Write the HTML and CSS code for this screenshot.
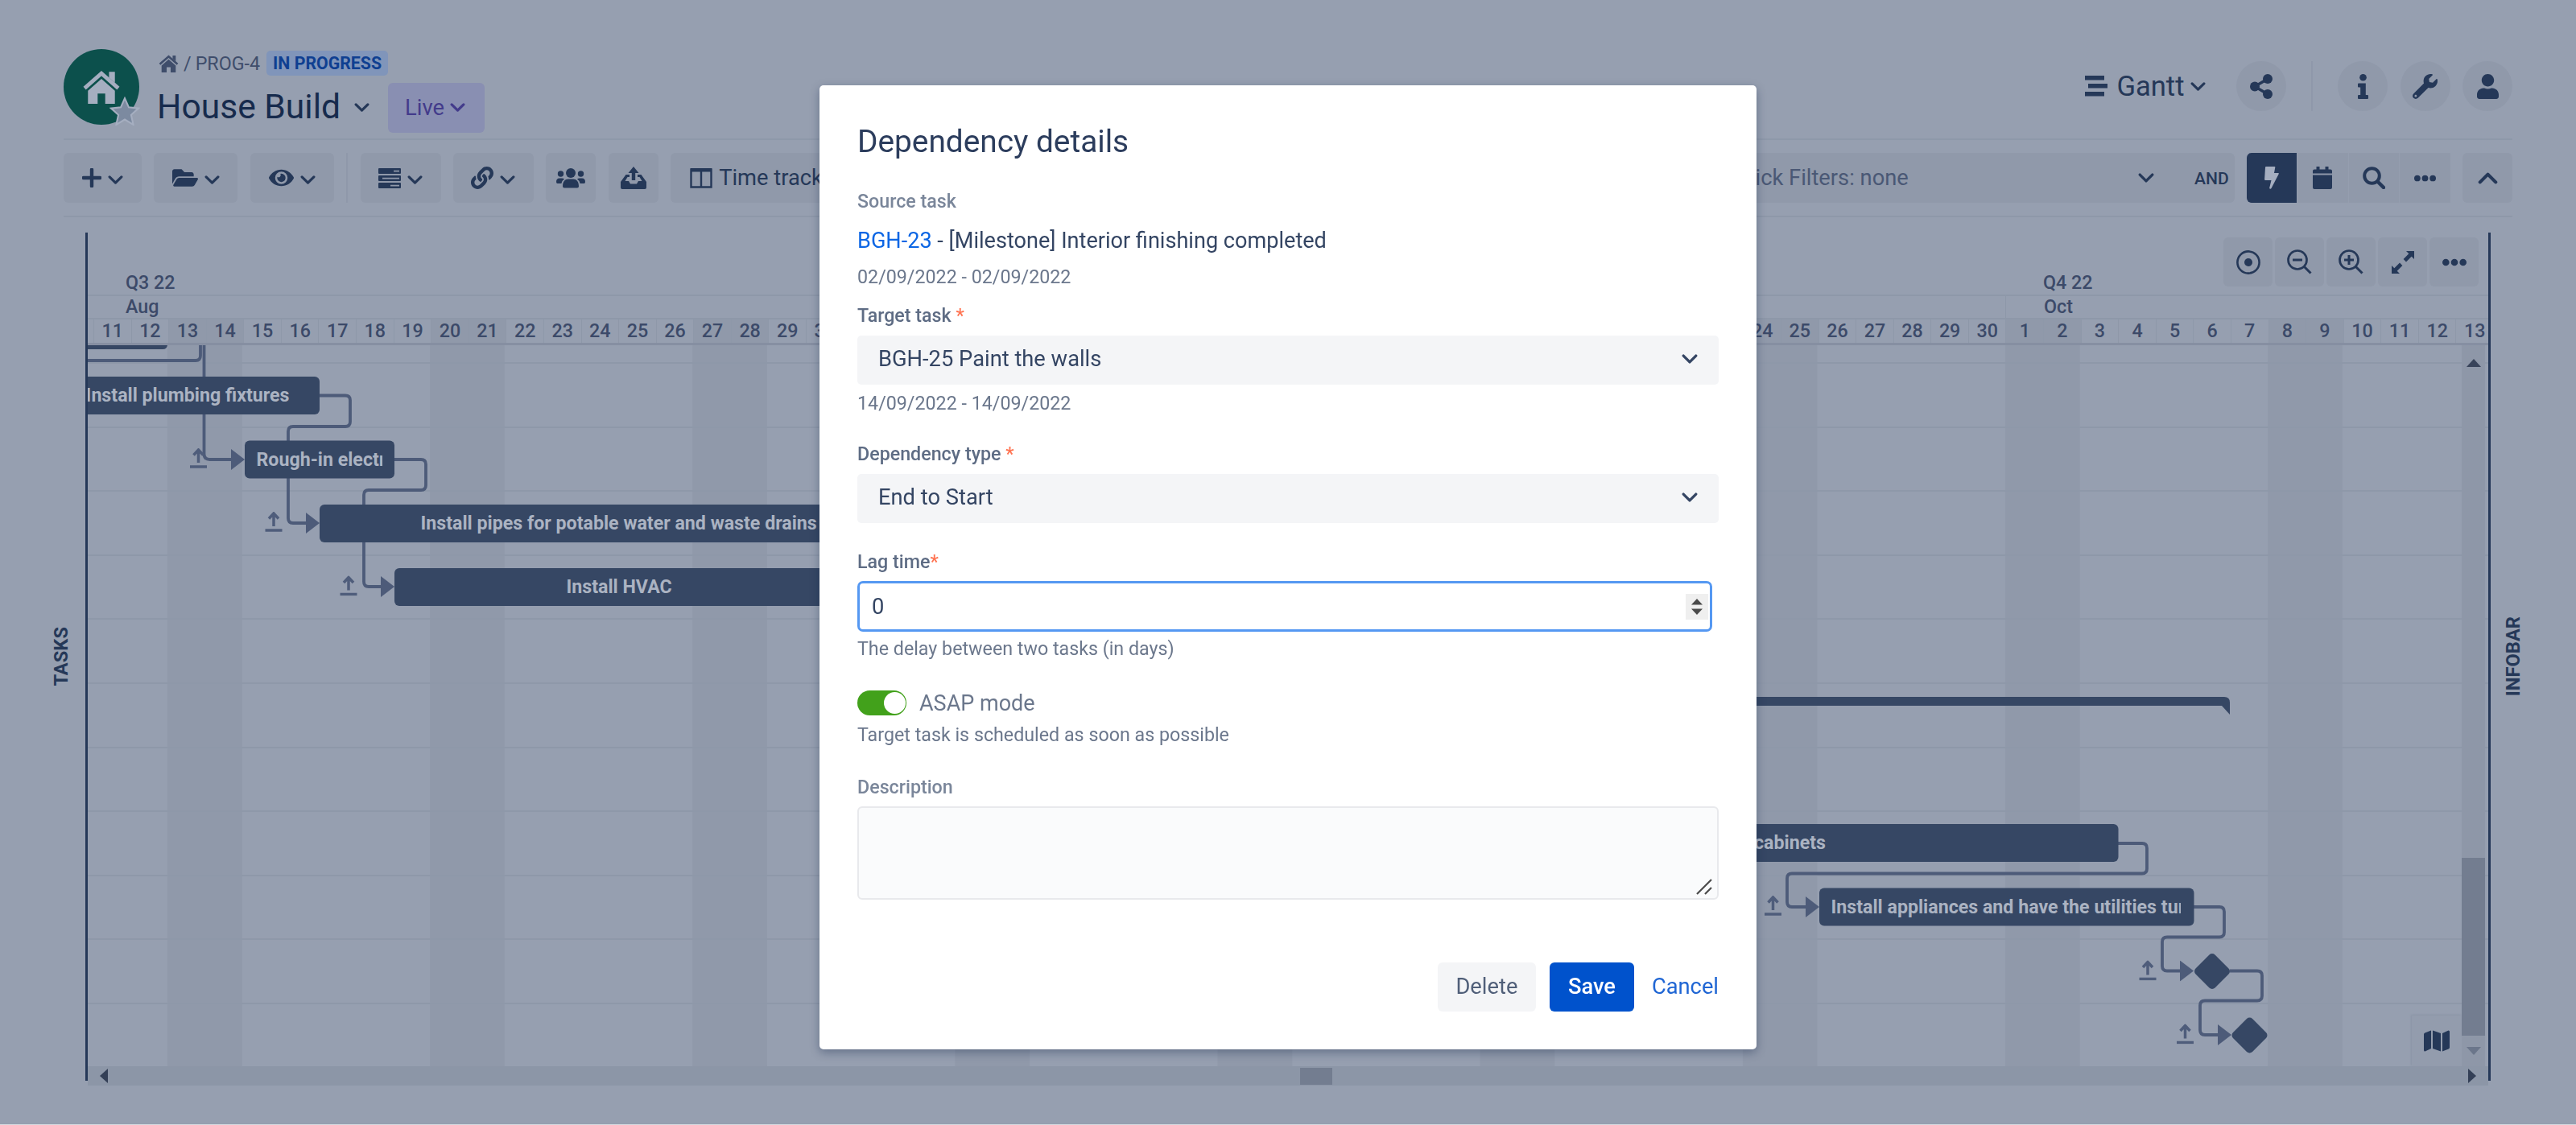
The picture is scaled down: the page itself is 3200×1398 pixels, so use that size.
FILE: index.html
```html
<!DOCTYPE html>
<html lang="en">
<head>
    <meta charset="utf-8">
    <title>House Build - Gantt</title>
    <link rel="stylesheet" href="styles.css">
</head>
<body>
    <svg class="sprite">
        <symbol id="chevron" viewBox="0 0 18 12"><path d="M2 2.5l7 7 7-7" fill="none" stroke="currentColor" stroke-width="3" stroke-linecap="round" stroke-linejoin="round"/></symbol>
        <symbol id="plus" viewBox="0 0 24 24"><path d="M12 1.8v20.4M1.8 12h20.4" fill="none" stroke="currentColor" stroke-width="4.4" stroke-linecap="round"/></symbol>
        <symbol id="home" viewBox="0 0 44 40"><path d="M2 21.500L22 4l20 17.500" fill="none" stroke="currentColor" stroke-width="4.600"/><path d="M31 2h7v13l-7-6zM22 10.500l16 14V40H26.500V28h-9v12H6V24.500z" fill="currentColor"/></symbol>
        <symbol id="star" viewBox="0 0 36 34"><path d="M18 2l4.700 10.600 11.300 1.200-8.500 7.700 2.500 11.500L18 27l-10 6 2.500-11.500L2 13.800l11.300-1.200z" fill="#7c8aa0" stroke="#a5aec0" stroke-width="2"/></symbol>
        <symbol id="folder" viewBox="0 48 576 416"><path fill="currentColor" d="M572.694 292.093L500.27 416.248A63.997 63.997 0 0 1 444.989 448H45.025c-18.523 0-30.064-20.093-20.731-36.093l72.424-124.155A64 64 0 0 1 152 256h399.964c18.523 0 30.064 20.093 20.73 36.093zM152 224h328v-48c0-26.51-21.49-48-48-48H272l-64-64H48C21.49 64 0 85.49 0 112v278.046l69.077-118.418C86.214 242.25 117.989 224 152 224z"/></symbol>
        <symbol id="eye" viewBox="0 56 576 400"><path fill="currentColor" d="M572.52 241.4C518.29 135.59 410.93 64 288 64S57.68 135.64 3.48 241.41a32.35 32.35 0 0 0 0 29.19C57.71 376.41 165.07 448 288 448s230.32-71.64 284.52-177.41a32.35 32.35 0 0 0 0-29.19zM288 400a144 144 0 1 1 144-144 143.93 143.93 0 0 1-144 144zm0-240a95.31 95.31 0 0 0-25.31 3.79 47.85 47.85 0 0 1-66.9 66.9A95.78 95.78 0 1 0 288 160z"/></symbol>
        <symbol id="rows" viewBox="0 0 28 25"><path fill="currentColor" fill-rule="evenodd" d="M1 0h26a1 1 0 0 1 1 1v5a1 1 0 0 1-1 1H1a1 1 0 0 1-1-1V1a1 1 0 0 1 1-1zM19 2.800v1.600h7V2.800zM1 9h26a1 1 0 0 1 1 1v5a1 1 0 0 1-1 1H1a1 1 0 0 1-1-1v-5a1 1 0 0 1 1-1zM5 11.800v1.600h21v-1.600zM1 18h26a1 1 0 0 1 1 1v5a1 1 0 0 1-1 1H1a1 1 0 0 1-1-1v-5a1 1 0 0 1 1-1zM15 20.800v1.600h11v-1.600z"/></symbol>
        <symbol id="link" viewBox="0 0 512 512"><path fill="currentColor" d="M326.612 185.391c59.747 59.809 58.927 155.698.36 214.59-.11.12-.24.25-.36.37l-67.2 67.2c-59.27 59.27-155.699 59.262-214.96 0-59.27-59.26-59.27-155.7 0-214.96l37.106-37.106c9.84-9.84 26.786-3.3 27.294 10.606.648 17.722 3.826 35.527 9.69 52.721 1.986 5.822.567 12.262-3.783 16.612l-13.087 13.087c-28.026 28.026-28.905 73.66-1.155 101.96 28.024 28.579 74.086 28.749 102.325.51l67.2-67.19c28.191-28.191 28.073-73.757 0-101.83-3.701-3.694-7.429-6.564-10.341-8.569a16.037 16.037 0 0 1-6.947-12.606c-.396-10.567 3.348-21.456 11.698-29.806l21.054-21.055c5.521-5.521 14.182-6.199 20.584-1.731a152.482 152.482 0 0 1 20.522 17.197zM467.547 44.449c-59.261-59.262-155.69-59.27-214.96 0l-67.2 67.2c-.12.12-.25.25-.36.37-58.566 58.892-59.387 154.781.36 214.59a152.454 152.454 0 0 0 20.521 17.196c6.402 4.468 15.064 3.789 20.584-1.731l21.054-21.055c8.35-8.35 12.094-19.239 11.698-29.806a16.037 16.037 0 0 0-6.947-12.606c-2.912-2.005-6.64-4.875-10.341-8.569-28.073-28.073-28.191-73.639 0-101.83l67.2-67.19c28.239-28.239 74.3-28.069 102.325.51 27.75 28.3 26.872 73.934-1.155 101.96l-13.087 13.087c-4.35 4.35-5.769 10.79-3.783 16.612 5.864 17.194 9.042 34.999 9.69 52.721.509 13.906 17.454 20.446 27.294 10.606l37.106-37.106c59.271-59.259 59.271-155.699.001-214.959z"/></symbol>
        <symbol id="users" viewBox="0 0 36 25"><g fill="currentColor"><circle cx="18" cy="6" r="6"/><circle cx="5.500" cy="7" r="3.700"/><circle cx="30.500" cy="7" r="3.700"/><path d="M8 22.500c0-6 3-9 7-9h6c4 0 7 3 7 9q0 2-2 2H10q-2 0-2-2zM0 17q0-4.500 4-4.500h3q2 0 3 1-3 2-3.600 5.500H1.500Q0 19 0 17zM36 17q0-4.500-4-4.500h-3q-2 0-3 1 3 2 3.600 5.500h4.900Q36 19 36 17z"/></g></symbol>
        <symbol id="export" viewBox="0 0 32 28"><g fill="currentColor"><path d="M16 0l6.500 8h-4.300v9h-4.400V8H9.500z"/><path d="M6.500 10H11v3H8.500L5.500 18H10l2 3.500h8l2-3.500h4.500l-3-5H21v-3h4.500L32 19v7q0 2-2 2H2q-2 0-2-2v-7z"/></g></symbol>
        <symbol id="columns" viewBox="0 0 28 25"><path d="M1.500 1.500h25v22h-25zM14 2v21" fill="none" stroke="currentColor" stroke-width="2.400"/><path d="M1 0h26v4.500H1z" fill="currentColor"/></symbol>
        <symbol id="gantt" viewBox="0 0 28 26"><path fill="currentColor" d="M0 0h24v5.500H0zM4 10h24v5.500H4zM0 20h24v5.500H0z"/></symbol>
        <symbol id="share" viewBox="0 0 28 31"><g fill="currentColor"><circle cx="22" cy="6" r="6"/><circle cx="6" cy="15.500" r="6"/><circle cx="22" cy="25" r="6"/></g><path d="M22 6L6 15.500 22 25" fill="none" stroke="currentColor" stroke-width="3.500"/></symbol>
        <symbol id="info" viewBox="0 0 13 31"><g fill="currentColor"><circle cx="6.500" cy="4.300" r="4.300"/><path d="M1 11.500h8.800V26H12q1 0 1 1v3q0 1-1 1H1q-1 0-1-1v-3q0-1 1-1h2.200v-9.500H1q-1 0-1-1v-3q0-1 1-1z"/></g></symbol>
        <symbol id="wrench" viewBox="0 0 512 512"><path fill="currentColor" d="M507.73 109.1c-2.24-9.03-13.54-12.09-20.12-5.51l-74.36 74.36-67.88-11.31-11.31-67.88 74.36-74.36c6.62-6.62 3.43-17.9-5.66-20.16-47.38-11.74-99.55.91-136.58 37.93-39.64 39.64-50.55 97.1-34.05 147.2L18.74 402.76c-24.99 24.99-24.99 65.51 0 90.5 24.99 24.99 65.51 24.99 90.5 0l213.21-213.21c50.12 16.71 107.47 5.68 147.37-34.22 37.07-37.07 49.7-89.32 37.91-136.73zM64 472c-13.25 0-24-10.75-24-24 0-13.26 10.75-24 24-24s24 10.74 24 24c0 13.25-10.75 24-24 24z"/></symbol>
        <symbol id="user" viewBox="0 0 448 512"><path fill="currentColor" d="M224 256c70.7 0 128-57.3 128-128S294.7 0 224 0 96 57.3 96 128s57.3 128 128 128zm89.6 32h-16.7c-22.2 10.200-46.900 16-72.900 16s-50.600-5.800-72.900-16h-16.700C60.200 288 0 348.200 0 422.400V464c0 26.500 21.500 48 48 48h352c26.500 0 48-21.500 48-48v-41.600c0-74.200-60.200-134.400-134.400-134.400z"/></symbol>
        <symbol id="bolt" viewBox="0 0 18 28"><path fill="currentColor" d="M2 0h10.500q1 0 .8 1L12 8h5q1.300 0 .7 1.300L8.500 27q-.6 1-1.500.8-1-.3-.8-1.300L8.500 17H1.200Q0 17 .1 15.800L1 1q.1-1 1-1z"/></symbol>
        <symbol id="calendar" viewBox="0 0 24 28"><path fill="currentColor" d="M4.500 0h4v3.500h7V0h4v3.500H22q2 0 2 2V8.500H0V5.500q0-2 2-2h2.500zM0 10.500h24V26q0 2-2 2H2q-2 0-2-2z"/></symbol>
        <symbol id="search" viewBox="0 0 28 28"><path d="M18.500 18.500l7.500 7.500" fill="none" stroke="currentColor" stroke-width="4.500" stroke-linecap="round"/><circle cx="11.500" cy="11.500" r="9.300" fill="none" stroke="currentColor" stroke-width="4"/></symbol>
        <symbol id="dots" viewBox="0 0 30 10"><g fill="currentColor"><circle cx="4.300" cy="5" r="4.300"/><circle cx="15" cy="5" r="4.300"/><circle cx="25.700" cy="5" r="4.300"/></g></symbol>
        <symbol id="target" viewBox="0 0 30 30"><circle cx="15" cy="15" r="13.600" fill="none" stroke="currentColor" stroke-width="2.600"/><circle cx="15" cy="15" r="5" fill="currentColor"/></symbol>
        <symbol id="zoom-out" viewBox="0 0 31 31"><path d="M20.500 20.500l9 9M7 13h12" fill="none" stroke="currentColor" stroke-width="3"/><circle cx="13" cy="13" r="11.500" fill="none" stroke="currentColor" stroke-width="2.700"/></symbol>
        <symbol id="zoom-in" viewBox="0 0 31 31"><path d="M20.500 20.500l9 9M7 13h12M13 7v12" fill="none" stroke="currentColor" stroke-width="3"/><circle cx="13" cy="13" r="11.500" fill="none" stroke="currentColor" stroke-width="2.700"/></symbol>
        <symbol id="expand" viewBox="0 0 28 28"><path fill="currentColor" d="M18 0h10v10l-3.300-3.300-6.700 6.700-3.400-3.400 6.700-6.700zM10 28H0V18l3.300 3.300 6.700-6.700 3.400 3.400-6.700 6.700z"/></symbol>
        <symbol id="map" viewBox="0 0 32 26"><path fill="currentColor" d="M0 5q0-1.500 1.300-2L9 0v22.500L1.500 26Q0 26 0 24.500zM11 0l10 3.500V26l-10-3.500zM23 3.500L30.500 0Q32 0 32 1.500V21q0 1.500-1.300 2L23 26z"/></symbol>
        <symbol id="asap" viewBox="0 0 22 25"><path d="M11 18V2.500M5 8.500l6-6.500 6 6.500M.5 23h21" fill="none" stroke="#4f5d7b" stroke-width="3.500"/></symbol>
        <symbol id="arrow" viewBox="0 0 17 26"><path fill="#4d5b79" d="M0 0l17 13L0 26z"/></symbol>
    </svg>

    <header class="header">
        <div class="avatar">
            <svg width="46" height="42"><use href="#home"/></svg>
            <svg class="favorite" width="38" height="36"><use href="#star"/></svg>
        </div>
        <div class="title-block">
            <div class="crumbs">
                <svg width="25" height="22"><use href="#home"/></svg>
                <span class="slash">/</span>
                <span>PROG-4</span>
                <span class="badge">IN PROGRESS</span>
            </div>
            <div class="title-row">
                <h1>House Build</h1>
                <svg width="19" height="13"><use href="#chevron"/></svg>
                <div class="live">Live <svg width="19" height="13"><use href="#chevron"/></svg></div>
            </div>
        </div>
        <div class="header-actions">
            <svg width="28" height="26"><use href="#gantt"/></svg>
            <span class="view-name">Gantt</span>
            <svg width="19" height="13"><use href="#chevron"/></svg>
            <div class="round share"><svg width="28" height="31"><use href="#share"/></svg></div>
            <div class="divider"></div>
            <div class="round"><svg width="13" height="31"><use href="#info"/></svg></div>
            <div class="round"><svg width="31" height="31"><use href="#wrench"/></svg></div>
            <div class="round"><svg width="27" height="31"><use href="#user"/></svg></div>
        </div>
    </header>

    <div class="toolbar">
        <div class="btn w97"><svg width="24" height="24"><use href="#plus"/></svg><svg width="19" height="13"><use href="#chevron"/></svg></div>
        <div class="btn w104"><svg width="32" height="24"><use href="#folder"/></svg><svg width="19" height="13"><use href="#chevron"/></svg></div>
        <div class="btn w104"><svg width="31" height="24"><use href="#eye"/></svg><svg width="19" height="13"><use href="#chevron"/></svg></div>
        <div class="divider"></div>
        <div class="btn w100"><svg width="28" height="25"><use href="#rows"/></svg><svg width="19" height="13"><use href="#chevron"/></svg></div>
        <div class="btn w100"><svg width="28" height="28"><use href="#link"/></svg><svg width="19" height="13"><use href="#chevron"/></svg></div>
        <div class="btn w62"><svg width="36" height="25"><use href="#users"/></svg></div>
        <div class="btn w62"><svg width="32" height="28"><use href="#export"/></svg></div>
        <div class="btn wide"><svg width="28" height="25"><use href="#columns"/></svg><span>Time tracking</span></div>

        <div class="filter">
            <span class="filter-text">Quick Filters: none</span>
            <svg width="20" height="14"><use href="#chevron"/></svg>
            <b>AND</b>
        </div>
        <div class="segments">
            <div class="active"><svg width="18" height="28"><use href="#bolt"/></svg></div>
            <div><svg width="24" height="28"><use href="#calendar"/></svg></div>
            <div><svg width="28" height="28"><use href="#search"/></svg></div>
            <div><svg width="27" height="9"><use href="#dots"/></svg></div>
        </div>
        <div class="btn w62"><svg class="flip" width="25" height="17"><use href="#chevron"/></svg></div>
    </div>

    <div class="workspace">
        <div class="side"><span>TASKS</span></div>
        <div class="chart">
            <div class="quarters">
                <span class="q-first">Q3 22</span><span>Q4 22</span>
                <div class="chart-tools">
                    <div><svg width="30" height="30"><use href="#target"/></svg></div>
                    <div><svg width="31" height="31"><use href="#zoom-out"/></svg></div>
                    <div><svg width="31" height="31"><use href="#zoom-in"/></svg></div>
                    <div><svg width="28" height="28"><use href="#expand"/></svg></div>
                    <div><svg width="30" height="10"><use href="#dots"/></svg></div>
                </div>
            </div>
            <div class="months"><span class="q-first">Aug</span><span class="oct">Oct</span></div>
            <div class="days" id="days"></div>
            <div class="canvas">
                <!-- bars and dependency lines -->
                <svg class="plan" width="2950" height="896" viewBox="109 429 2950 896">
                    <g class="links">
                        <path d="M109 448H243q6 0 6-6V420"/>
                        <path d="M253.500 420V564q0 7 7 7H292"/>
                        <path d="M397 491.500H429q6 0 6 6V524q0 6-6 6H364q-6 0-6 6V644q0 6 6 6H385"/>
                        <path d="M490 571H523q6 0 6 6V603q0 6-6 6H458q-6 0-6 6V723q0 6 6 6H478"/>
                        <path d="M2631 1048H2661q6 0 6 6V1079.500q0 6-6 6H2226q-6 0-6 6V1121q0 6 6 6H2248"/>
                        <path d="M2725 1127H2757q6 0 6 6V1158.500q0 6-6 6H2692q-6 0-6 6V1200.500q0 6 6 6H2713"/>
                        <path d="M2770 1206.500H2804q6 0 6 6V1237.500q0 6-6 6H2739q-6 0-6 6V1280q0 6 6 6H2760"/>
                    </g>
                    <g class="bars">
                        <path d="M100 420H208V428q0 6-6 6H100z"/>
                        <rect x="90" y="468" width="307" height="47" rx="6"/>
                        <rect x="304" y="547.500" width="186" height="47" rx="6"/>
                        <rect x="397" y="627" width="1000" height="47" rx="6"/>
                        <rect x="490" y="706" width="557" height="47" rx="6"/>
                        <path d="M1500 866H2763q7 0 7 7V888l-10-11H1500z"/>
                        <rect x="1900" y="1024" width="731.500" height="47" rx="6"/>
                        <rect x="2260" y="1103.500" width="465.500" height="47" rx="6"/>
                        <rect x="2731" y="1190" width="34" height="34" rx="5" transform="rotate(45 2748 1207)"/>
                        <rect x="2777.500" y="1269.500" width="34" height="34" rx="5" transform="rotate(45 2794.500 1286.500)"/>
                    </g>
                    <use href="#arrow" x="287" y="558" width="17" height="26"/>
                    <use href="#arrow" x="380" y="637" width="17" height="26"/>
                    <use href="#arrow" x="473" y="716" width="17" height="26"/>
                    <use href="#arrow" x="2243" y="1114" width="17" height="26"/>
                    <use href="#arrow" x="2708" y="1193.500" width="17" height="26"/>
                    <use href="#arrow" x="2755" y="1273" width="17" height="26"/>
                    <use href="#asap" x="235.500" y="557" width="22" height="25"/>
                    <use href="#asap" x="329" y="636" width="22" height="25"/>
                    <use href="#asap" x="422" y="715.500" width="22" height="25"/>
                    <use href="#asap" x="2191.500" y="1113" width="22" height="25"/>
                    <use href="#asap" x="2657" y="1193.500" width="22" height="25"/>
                    <use href="#asap" x="2703.500" y="1272.500" width="22" height="25"/>
                    <g class="labels">
                        <text x="359.500" y="499" text-anchor="end">Install plumbing fixtures</text>
                        <svg x="316" y="548" width="159" height="46"><text x="2.500" y="30.500">Rough-in electrical</text></svg>
                        <text x="522.500" y="657.500">Install pipes for potable water and waste drains</text>
                        <text x="703.500" y="737">Install HVAC</text>
                        <text x="2268" y="1055" text-anchor="end">Install kitchen cabinets</text>
                        <svg x="2272" y="1104" width="437" height="46"><text x="2.500" y="30.500">Install appliances and have the utilities turned on</text></svg>
                    </g>
                </svg>
                <div class="minimap"><svg width="32" height="27"><use href="#map"/></svg></div>
                <div class="vscroll">
                    <svg width="18" height="10" viewBox="0 0 18 10"><path d="M0 10L9 0l9 10z" fill="#38435a"/></svg>
                    <div class="vthumb"></div>
                    <svg width="18" height="10" viewBox="0 0 18 10"><path d="M0 0l9 10 9-10z" fill="#6b768b"/></svg>
                </div>
            </div>
            <div class="hscroll">
                <svg width="10" height="18" viewBox="0 0 10 18"><path d="M10 0L0 9l10 9z" fill="#333f56"/></svg>
                <div class="hthumb"></div>
                <svg width="10" height="18" viewBox="0 0 10 18"><path d="M0 0l10 9-10 9z" fill="#333f56"/></svg>
            </div>
        </div>
        <div class="side"><span>INFOBAR</span></div>
    </div>

    <div class="overlay">
        <div class="modal">
            <h2>Dependency details</h2>

            <div class="label muted source">Source task</div>
            <div class="task"><a>BGH-23</a> - [Milestone] Interior finishing completed</div>
            <div class="help dates">02/09/2022 - 02/09/2022</div>

            <div class="label target">Target task <i>*</i></div>
            <div class="select">BGH-25 Paint the walls<svg width="20" height="14"><use href="#chevron"/></svg></div>
            <div class="help target-dates">14/09/2022 - 14/09/2022</div>

            <div class="label type">Dependency type <i>*</i></div>
            <div class="select">End to Start<svg width="20" height="14"><use href="#chevron"/></svg></div>

            <div class="label lag">Lag time<i>*</i></div>
            <div class="number">
                <span>0</span>
                <div class="spinner">
                    <svg width="14" height="20" viewBox="0 0 14 20"><path d="M0 7.500L7 0l7 7.500zM0 12.500L7 20l7-7.500z" fill="#4a4a4a"/></svg>
                </div>
            </div>
            <div class="help lag-help">The delay between two tasks (in days)</div>

            <div class="toggle-row"><div class="toggle"></div>ASAP mode</div>
            <div class="help asap-help">Target task is scheduled as soon as possible</div>

            <div class="label muted desc">Description</div>
            <div class="textarea">
                <svg width="20" height="20" viewBox="0 0 20 20"><path d="M1 19L19 1M11 19l8-8" stroke="#4a4a4a" stroke-width="2.200"/></svg>
            </div>

            <div class="buttons">
                <div class="delete">Delete</div>
                <div class="save">Save</div>
                <div class="cancel">Cancel</div>
            </div>
        </div>
    </div>

    <script>
        // day header: 11 Aug - 13 Oct 2022
        const days = document.getElementById('days');
        for (let d = new Date(2022, 7, 11); d <= new Date(2022, 9, 13); d.setDate(d.getDate() + 1)) {
            const cell = document.createElement('div');
            cell.textContent = d.getDate();
            if (d.getDay() === 0 || d.getDay() === 6) cell.className = 'weekend';
            days.appendChild(cell);
        }
    </script>
</body>
</html>
```
FILE: styles.css
```css
* {
    box-sizing: border-box;
}
body {
    margin: 0;
    height: 1398px;
    overflow: hidden;
    font-family: Roboto, sans-serif;
    font-size: 27.3px;
    color: #253858;
    background: #969fb0;
    border-bottom: 1px solid #d5d9e0;
}
svg {
    display: block;
    flex: none;
}
.sprite {
    width: 0;
    height: 0;
    position: absolute;
}
.divider {
    width: 2px;
    height: 62px;
    background: #8f98aa;
}

/* header */
.header {
    display: flex;
    height: 174px;
    margin: 0 79px;
    border-bottom: 2px solid #8e98a9;
}
.avatar {
    position: relative;
    width: 94px;
    height: 94px;
    margin-top: 61px;
    border-radius: 50%;
    background: #0c504c;
    color: #a5aec0;
    display: flex;
    align-items: center;
    justify-content: center;
}
.favorite {
    position: absolute;
    left: 57px;
    top: 59px;
}
.title-block {
    padding: 63px 0 0 24px;
}
.crumbs {
    display: flex;
    align-items: center;
    height: 31px;
    font-size: 23.3px;
    color: #3f4d6b;
}
.slash {
    margin: 0 5px 0 6px;
}
.badge {
    margin-left: 8px;
    padding: 0 8px;
    height: 31px;
    line-height: 32px;
    border-radius: 5px;
    background: #8095ba;
    color: #0f3f91;
    font-size: 21.3px;
    font-weight: 700;
}
.title-row {
    display: flex;
    align-items: center;
    margin-top: 8px;
    height: 63px;
}
h1 {
    margin: -3px 17px 0 -2px;
    font-size: 42.6px;
    font-weight: 400;
    color: #172b4d;
}
.live {
    display: flex;
    align-items: center;
    gap: 7px;
    width: 120px;
    height: 62px;
    margin-left: 23px;
    padding-left: 21px;
    border-radius: 6px;
    background: #898fb2;
    color: #433b8b;
}
.header-actions {
    display: flex;
    align-items: center;
    height: 62px;
    margin: 76px 0 0 auto;
}
.view-name {
    margin: 0 7px 0 11px;
    font-size: 34.6px;
}
.round {
    display: flex;
    align-items: center;
    justify-content: center;
    width: 62px;
    height: 62px;
    margin-left: 15.5px;
    border-radius: 50%;
    background: #9099aa;
}
.share {
    margin: 0 31px 0 38px;
}
.header-actions .divider {
    margin-right: 16px;
}

/* toolbar */
.toolbar {
    display: flex;
    gap: 15.4px;
    height: 96px;
    margin: 0 79px;
    padding-top: 16px;
    border-bottom: 2px solid #8e98a9;
}
.btn {
    display: flex;
    align-items: center;
    justify-content: center;
    gap: 8px;
    height: 62px;
    border-radius: 6px;
    background: #9099aa;
}
.w97 { width: 97px; }
.w104 { width: 104px; }
.w100 { width: 100px; }
.w62 { width: 62px; }
.btn svg + svg {
    margin-top: 4px;
}
.wide {
    padding: 0 22px 0 24px;
}
.flip {
    transform: rotate(180deg);
}
.filter {
    display: flex;
    align-items: center;
    width: 673px;
    height: 62px;
    margin-left: auto;
    padding: 0 7px 0 44px;
    border-radius: 6px;
    background: #9099aa;
}
.filter-text {
    flex: 1;
    color: #4a5875;
}
.filter b {
    margin-left: 50px;
    font-size: 21.1px;
    font-weight: 500;
}
.segments {
    display: flex;
}
.segments div {
    display: flex;
    align-items: center;
    justify-content: center;
    width: 63.5px;
    height: 62px;
    background: #9099aa;
    border-left: 1px solid #959eaf;
}
.segments .active {
    width: 62px;
    border-radius: 6px 0 0 6px;
    border: 0;
    background: #253858;
    color: #a5aec0;
}

/* chart */
.workspace {
    display: flex;
    margin-top: 19px;
}
.side {
    width: 106px;
    height: 1054px;
    display: flex;
    align-items: center;
    justify-content: center;
}
.side span {
    writing-mode: vertical-rl;
    transform: rotate(180deg);
    font-size: 23.7px;
    font-weight: 700;
}
.side:first-child {
    padding-left: 45px;
}
.side:last-child {
    padding-right: 50px;
}
.chart {
    flex: 1;
    min-width: 0;
    height: 1054px;
    border: solid #253858;
    border-width: 0 3px;
    color: #3c4a69;
    font-size: 23.3px;
    font-weight: 500;
}
.quarters, .months {
    position: relative;
    display: flex;
    align-items: flex-end;
    border-bottom: 2px solid #8e98a9;
}
.quarters {
    height: 79px;
    line-height: 27px;
    padding-bottom: 1px;
}
.months {
    height: 29px;
    line-height: 27px;
}
.quarters span, .months span {
    padding-left: 47px;
}
.quarters .q-first, .months .q-first {
    width: 2382px;
}
.months .oct {
    border-left: 1px solid #8d97a8;
}
.chart-tools {
    position: absolute;
    right: 12px;
    top: 6px;
    display: flex;
    gap: 3px;
    color: #253858;
}
.chart-tools div {
    display: flex;
    align-items: center;
    justify-content: center;
    width: 61px;
    height: 61px;
    border-radius: 6px;
    background: #9099aa;
}
.days {
    display: flex;
    height: 32px;
    padding-left: 7px;
    overflow: hidden;
    border-bottom: 3px solid #868fa2;
}
.days div {
    flex: none;
    width: 46.59px;
    line-height: 29px;
    text-align: center;
    border-left: 1px solid #8e98a9;
}
.days .weekend {
    background: #9099aa;
}
.canvas {
    position: relative;
    height: 896px;
    background:
        repeating-linear-gradient(to bottom, transparent 0 21px, #8e98a9 21px 23px, transparent 23px 79.6px),
        linear-gradient(to right, #9099aa 93.2px, transparent 93.2px) 99px 0 / 326.13px 100%;
}
.plan {
    position: absolute;
    left: 0;
    top: 0;
}
.links {
    fill: none;
    stroke: #4d5b79;
    stroke-width: 3.8;
}
.bars {
    fill: #364764;
}
.labels {
    fill: #abb3c2;
    font-size: 23.2px;
    font-weight: 700;
}
.minimap {
    position: absolute;
    right: 33px;
    bottom: 0;
    width: 62px;
    height: 63px;
    display: flex;
    align-items: center;
    justify-content: center;
    background: #939cad;
    color: #253858;
    box-shadow: -1px -1px 2px #8a94a6;
}
.vscroll {
    position: absolute;
    right: 4px;
    top: 0;
    width: 29px;
    height: 896px;
    padding: 17px 0 14px;
    display: flex;
    flex-direction: column;
    align-items: center;
    justify-content: space-between;
    background: #8e97a8;
}
.vthumb {
    width: 29px;
    height: 221px;
    margin: 596px 0 0;
    background: #737d90;
}
.hscroll {
    display: flex;
    align-items: center;
    justify-content: space-between;
    height: 24px;
    padding: 0 15px;
    background: #8c96a7;
}
.hthumb {
    width: 40px;
    height: 21px;
    margin-left: 70px;
    background: #737d90;
}

/* modal */
.overlay {
    position: fixed;
    inset: 0;
    display: flex;
    justify-content: center;
    align-items: flex-start;
    padding-top: 106px;
}
.modal {
    width: 1164px;
    height: 1198px;
    padding: 46px 47px 0;
    border-radius: 5px;
    background: #fff;
    color: #344563;
    box-shadow: 0 4px 12px rgba(9,30,66,.35);
}
h2 {
    margin: 0;
    font-size: 38.8px;
    line-height: 48px;
    font-weight: 400;
    color: #2c3d5d;
}
.label, .help {
    font-size: 23.25px;
    line-height: 28px;
    color: #6b778c;
}
.label {
    font-weight: 500;
    color: #5e6c84;
}
.label.muted {
    color: #7a869a;
}
.label i {
    font-style: normal;
    color: #ff7452;
}
.source { margin-top: 36px; }
.task {
    margin-top: 17px;
    font-size: 27.1px;
    line-height: 36px;
}
.task a {
    color: #0c66e4;
}
.dates { margin-top: 13px; }
.target { margin-top: 20px; }
.select {
    display: flex;
    align-items: center;
    justify-content: space-between;
    height: 61px;
    margin-top: 11px;
    padding: 0 26px 3px 26px;
    border-radius: 5px;
    background: #f4f5f7;
}
.target-dates { margin-top: 9px; }
.type { margin-top: 35px; }
.lag { margin-top: 34px; }
.number {
    display: flex;
    align-items: center;
    justify-content: space-between;
    width: 1062px;
    height: 63px;
    margin-top: 10px;
    padding: 0 2px 0 15px;
    border: 3px solid #5598f2;
    border-radius: 7px;
}
.spinner {
    display: flex;
    align-items: center;
    justify-content: center;
    width: 28px;
    height: 32px;
    background: #efefef;
}
.lag-help { margin-top: 7px; }
.toggle-row {
    display: flex;
    align-items: center;
    gap: 16px;
    height: 31px;
    margin-top: 38px;
    color: #6b778c;
    font-size: 27px;
}
.toggle {
    width: 61px;
    height: 31px;
    padding: 2px;
    border-radius: 16px;
    background: #42a11b;
}
.toggle::after {
    content: "";
    display: block;
    width: 27px;
    height: 27px;
    margin-left: 31px;
    border-radius: 50%;
    background: #fff;
}
.asap-help { margin-top: 10px; }
.desc { margin-top: 37px; }
.textarea {
    display: flex;
    align-items: flex-end;
    justify-content: flex-end;
    height: 116px;
    margin-top: 10px;
    padding: 0 6px 4px 0;
    border: 2px solid #e8e9ec;
    border-radius: 6px;
    background: #fafbfc;
}
.buttons {
    display: flex;
    justify-content: flex-end;
    margin-top: 78px;
    line-height: 60px;
}
.delete, .save {
    height: 61px;
    border-radius: 6px;
    text-align: center;
}
.delete {
    width: 122px;
    margin-right: 17px;
    background: #f4f5f7;
    color: #505f79;
}
.save {
    width: 105px;
    margin-right: 22px;
    background: #0052cc;
    color: #fff;
    font-weight: 500;
}
.cancel {
    color: #2066d4;
}
```
